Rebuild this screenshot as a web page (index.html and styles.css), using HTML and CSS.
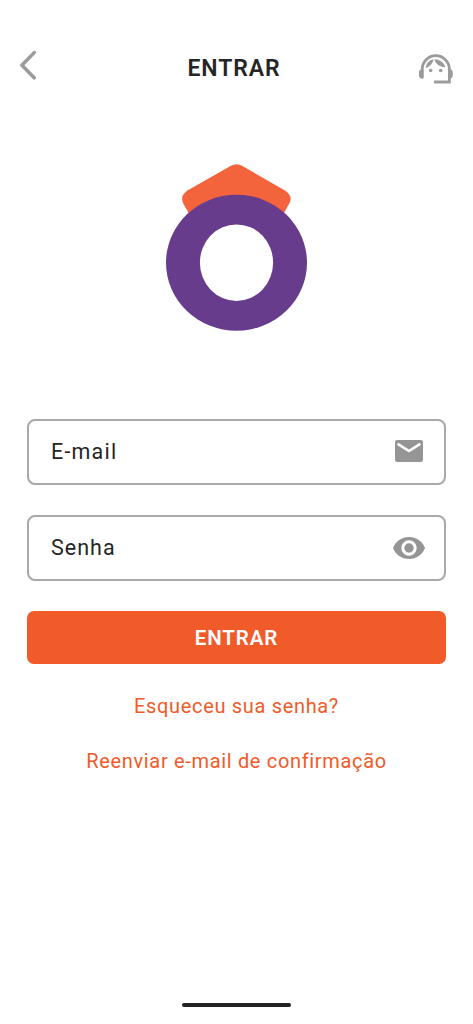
FILE: index.html
```html
<!DOCTYPE html>
<html lang="pt-BR">
<head>
<meta charset="utf-8">
<meta name="viewport" content="width=device-width, initial-scale=1">
<title>Entrar</title>
<link rel="stylesheet" href="styles.css">
</head>
<body>
<div class="screen">
  <header class="header">
    <svg class="back" width="18" height="30" viewBox="0 0 18 30"><path d="M15.2 2.600 2.900 15.200l12.300 12.600"/></svg>
    <h1 class="title">ENTRAR</h1>
    <svg class="support" width="34" height="32" viewBox="0 0 34 32">
      <path class="line" d="M3.200 23V15.300A13.600 13.600 0 0 1 30.400 15.300V28H16.200"/>
      <path class="fill" d="M4.400 15.500v9H3C1.200 24.500 0 23.300 0 21.500v-3c0-1.700 1-3 2.600-3zM29.400 15.500h2c1.500 0 2.300 1.300 2.300 3v3c0 1.800-1.200 3-3 3h-1.300zM6.700 14C7 9.500 10 5.900 14.500 5.200 14.200 9 11.200 12.500 6.700 14zM15.300 5.200c5 0 9.700 3.100 11 7.800-5 .4-9.500-2.800-11-7.800z"/>
      <circle class="fill" cx="11.700" cy="16.500" r="1.800"/><circle class="fill" cx="21.700" cy="16.500" r="1.800"/>
    </svg>
  </header>
  <main class="content">
    <svg class="logo" width="142" height="168" viewBox="0 0 142 168">
      <path fill="#f3643d" d="M65 1.800Q70.500-1.300 76 1.800L119 26.500Q126.500 31.500 124 38L111 62H30L17.500 40Q13.500 32.500 21 26.800z"/>
      <ellipse cx="70.500" cy="98.700" rx="70.500" ry="68" fill="#683c8d"/>
      <ellipse cx="70.500" cy="98.700" rx="36.600" ry="38.300" fill="#fff"/>
    </svg>
    <form class="form">
      <div class="field">
        <span class="label email">E-mail</span>
        <svg class="mail-icon" width="28" height="22" viewBox="0 0 28 22"><rect width="28" height="22" rx="2.200" fill="#959595"/><path d="m3.500 4.300 10.500 6.700 10.500-6.700" fill="none" stroke="#fff" stroke-width="2.600" stroke-linecap="round"/></svg>
      </div>
      <div class="field">
        <span class="label senha">Senha</span>
        <svg class="eye-icon" width="32" height="22" viewBox="0 0 32 22"><path d="M0 11C2.600 4.200 8.700 0 16 0s13.400 4.200 16 11c-2.600 6.800-8.700 11-16 11S2.600 17.800 0 11z" fill="#959595"/><circle cx="16" cy="11" r="6.200" fill="#959595" stroke="#fff" stroke-width="3"/></svg>
      </div>
      <button class="submit" type="button">ENTRAR</button>
    </form>
    <nav class="links">
      <a class="link forgot">Esqueceu sua senha?</a>
      <a class="link resend">Reenviar e-mail de confirmação</a>
    </nav>
  </main>
  <div class="home-bar"></div>
</div>
</body>
</html>
```
FILE: styles.css
```css
* { box-sizing: border-box; }
body { margin: 0; background: #fff; font-family: Roboto, "Noto Sans", sans-serif; color: #252525; }
svg { display: block; flex: none; }
.screen { height: 1024px; display: flex; flex-direction: column; align-items: center; padding-bottom: 17.500px; }
.header { width: 100%; height: 98px; padding: 50px 20px 0 19px; display: grid; grid-template-columns: 34px 1fr 34px; align-items: start; }
.back { fill: none; stroke: #9b9b9b; stroke-width: 3.500; stroke-linecap: round; stroke-linejoin: round; }
.title { margin: 5px 0 0; padding-right: 4px; font-size: 23px; line-height: 28px; font-weight: 600; letter-spacing: 0.900px; text-align: center; }
.support { margin-top: 4px; }
.support .line { fill: none; stroke: #9b9b9b; stroke-width: 2.800; stroke-linecap: round; }
.support .fill { fill: #9b9b9b; }
.content { flex: 1; width: 100%; padding: 66px 27px 0; display: flex; flex-direction: column; align-items: center; }
.form { width: 419px; margin-top: 86.500px; display: flex; flex-direction: column; gap: 30px; }
.field { height: 66.300px; border: 2px solid #a9a9a9; border-radius: 8px; padding: 0 21px 0 22px; display: flex; align-items: center; justify-content: space-between; }
.label { font-size: 21.500px; line-height: 28px; letter-spacing: 1px; }
.email { letter-spacing: 1.200px; }
.mail-icon { margin-bottom: 2px; }
.eye-icon { margin-right: -2px; }
.submit { height: 52.500px; border: 0; border-radius: 7px; background: #f15a29; color: #fff; font: 600 20.500px/28px Roboto, "Noto Sans", sans-serif; letter-spacing: 0.900px; padding: 1px 0 0; }
.links { margin-top: 28px; display: flex; flex-direction: column; align-items: center; gap: 27px; }
.link { color: #f15a29; font-size: 20px; line-height: 28px; letter-spacing: 0.670px; white-space: nowrap; }
.home-bar { width: 109px; height: 4px; border-radius: 2px; background: #222; }
```
